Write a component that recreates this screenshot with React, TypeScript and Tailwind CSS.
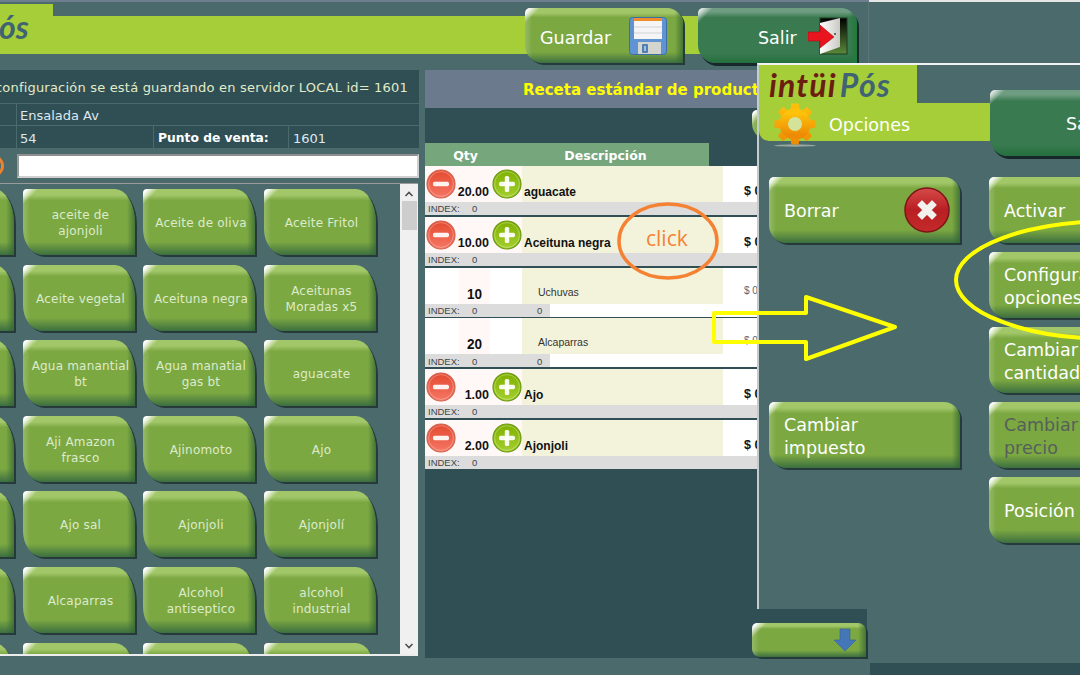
import React from "react";

const FONT = "[font-family:'DejaVu_Sans',sans-serif]";
const ARIAL = "[font-family:'Liberation_Sans',sans-serif]";
const LOGO = "[font-family:'Lato',sans-serif]";

const SHAPE_TILE = "[border-radius:4px_20px_0_20px/4px_34px_0_26px]";
const SHAPE_BTN = "[border-radius:5px_16px_0_18px]";
const GREEN =
  "[background-image:linear-gradient(135deg,#ffffff_0,#ffffff_3px,rgba(255,255,255,0)_11px),linear-gradient(to_left,rgba(50,100,50,.75),rgba(50,100,50,0)_8px),linear-gradient(to_right,rgba(255,255,255,.2),rgba(255,255,255,0)_7px),linear-gradient(to_bottom,#a2c769_0,#a2c769_9%,#7ca842_17%,#7ca842_80%,#3c6f40_100%)] shadow-[2px_2px_0_#263a3c]";
const DARK =
  "[background-image:linear-gradient(135deg,#dfe8e3_0,#dfe8e3_3px,rgba(255,255,255,0)_11px),linear-gradient(to_left,#1f7a3c,rgba(31,122,60,0)_8px),linear-gradient(to_bottom,#6f9d82_0,#6f9d82_7%,#3a7a50_17%,#3a7a50_82%,#23703d_100%)] shadow-[2px_3px_0_#17282a]";

const tiles = [
  "", "aceite de ajonjoli", "Aceite de oliva", "Aceite Fritol",
  "", "Aceite vegetal", "Aceituna negra", "Aceitunas Moradas x5",
  "", "Agua manantial bt", "Agua manatial gas bt", "aguacate",
  "", "Aji Amazon frasco", "Ajinomoto", "Ajo",
  "", "Ajo sal", "Ajonjoli", "Ajonjolí",
  "", "Alcaparras", "Alcohol antiseptico", "alcohol industrial",
  "", "", "", "",
];

function RoundIcon({ plus }: { plus?: boolean }) {
  const id = plus ? "gp" : "gm";
  return (
    <svg width="30" height="30" viewBox="0 0 30 30" className="shrink-0">
      <defs>
        <linearGradient id={id} x1="0" y1="0" x2="0" y2="1">
          <stop offset="0" stopColor={plus ? "#7fb000" : "#e4492f"} />
          <stop offset="1" stopColor={plus ? "#a5cf2e" : "#f57766"} />
        </linearGradient>
      </defs>
      <circle cx="15" cy="15" r="14" fill={`url(#${id})`} stroke={plus ? "#6c9a12" : "#d2664f"} strokeWidth="1.2" />
      <circle cx="15" cy="15" r="12.4" fill="none" stroke="#ffffff" strokeOpacity=".3" />
      <rect x="7" y="12.8" width="16" height="4.4" rx="1.6" fill="#fff" fillOpacity=".92" />
      {plus && <rect x="12.8" y="7" width="4.4" height="16" rx="1.6" fill="#fff" fillOpacity=".92" />}
    </svg>
  );
}

function Row({ qty, name, alt }: { qty: string; name: string; alt?: boolean }) {
  return (
    <div className={`h-[50.8px] flex flex-col bg-white ${ARIAL} text-[#111]`}>
      <div className="h-[36px] flex">
        {alt ? (
          <div className="w-[97px] flex">
            <div className="w-[32px]" />
            <div className="w-[35px] bg-[#fff8f7] flex items-end justify-center pb-[1px] text-[15px] leading-[18px] font-bold [transform:scaleX(.9)]">{qty}</div>
          </div>
        ) : (
          <div className="w-[97px] bg-[#fff8f7] flex pl-[1px] pt-[3px]">
            <RoundIcon />
            <div className="w-[36px] pt-[16px] text-right pr-[3px] text-[12.5px] leading-[14px] font-bold whitespace-nowrap">{qty}</div>
            <RoundIcon plus />
          </div>
        )}
        <div className={`w-[201px] bg-[#f3f3dc] ${alt ? "pl-[16px] pt-[18px] text-[10.5px] leading-[12px] text-[#333]" : "pl-[2px] pt-[19px] text-[12px] leading-[14px] font-bold"}`}>{name}</div>
        <div className={`pl-[21px] ${alt ? "pt-[17px] text-[10px] text-[#556677] leading-[12px]" : "pt-[18px] text-[12.5px] font-bold leading-[14px]"}`}>$ 0</div>
      </div>
      <div className="h-[13px] bg-white">
        <div className={`h-full bg-[#dcdcdc] flex items-center pt-[1px] text-[9.5px] text-[#444] leading-none ${alt ? "w-[125px]" : "w-full"}`}>
          <span className="pl-[3px] w-[47px]">INDEX:</span>
          <span className="w-[65px]">0</span>
          {alt && <span>0</span>}
        </div>
      </div>
      <div className="h-[1.8px] bg-[#2f4f55]" />
    </div>
  );
}

function BigBtn({ children, disabled, icon }: { children?: React.ReactNode; disabled?: boolean; icon?: React.ReactNode }) {
  return (
    <div className={`h-[66px] flex items-center justify-between pl-[15px] pr-[10px] text-[17.5px] leading-[23px] ${GREEN} ${SHAPE_BTN} ${disabled ? "text-[#55605a]" : "text-white"}`}>
      <span className="whitespace-nowrap pt-[3px]">{children}</span>
      {icon}
    </div>
  );
}

function SaveIcon() {
  return (
    <svg width="38" height="38" viewBox="0 0 38 38">
      <rect x=".5" y=".5" width="37" height="37" rx="3" fill="#5f93d3" stroke="#3e6ea8" />
      <rect x="5" y="1" width="28" height="3" fill="#ef8c2c" />
      <rect x="5" y="4" width="28" height="18" fill="#f5f5f5" />
      <path d="M5 10h28M5 16h28" stroke="#cfd3d8" />
      <rect x="9" y="25" width="23" height="12" fill="#d5d5d0" />
      <rect x="13" y="27" width="6" height="9" rx="1" fill="#4f7fb5" />
      <rect x="15" y="29" width="2" height="5" fill="#9fc0e0" />
    </svg>
  );
}

function DoorIcon() {
  return (
    <svg width="40" height="38" viewBox="0 0 40 38">
      <defs>
        <linearGradient id="dg" x1="0" y1="0" x2="0" y2="1">
          <stop offset="0" stopColor="#000" />
          <stop offset="1" stopColor="#5b8a3a" />
        </linearGradient>
        <linearGradient id="dw" x1="0" y1="0" x2="1" y2="0">
          <stop offset="0" stopColor="#ffffff" />
          <stop offset="1" stopColor="#c9c9c4" />
        </linearGradient>
      </defs>
      <rect x="12" y="1" width="27" height="36" fill="url(#dg)" stroke="#1d3d25" />
      <path d="M12 6 L32 1 V30 L12 37 Z" fill="url(#dw)" />
      <path d="M0 15h12v-7l14 12-14 11v-7H0z" fill="#e8141e" stroke="#a01018" strokeWidth=".6" />
      <circle cx="27" cy="17" r="1" fill="#444" />
    </svg>
  );
}

function CloseIcon() {
  return (
    <svg width="46" height="46" viewBox="0 0 46 46">
      <defs>
        <linearGradient id="xg" x1="0" y1="0" x2="0" y2="1">
          <stop offset="0" stopColor="#d84a4a" />
          <stop offset=".5" stopColor="#b81f22" />
          <stop offset="1" stopColor="#c42a2a" />
        </linearGradient>
      </defs>
      <circle cx="23" cy="23" r="22" fill="url(#xg)" stroke="#7a1518" strokeWidth="1.5" />
      <path d="M14 18l4-4 5 5 5-5 4 4-5 5 5 5-4 4-5-5-5 5-4-4 5-5z" fill="#f3f1ee" stroke="#f3f1ee" strokeWidth="1.2" strokeLinejoin="round" />
    </svg>
  );
}

function Gear() {
  const angles = [0, 45, 90, 135, 180, 225, 270, 315];
  return (
    <svg width="42" height="44" viewBox="0 0 42 44" className="shrink-0">
      <defs>
        <linearGradient id="gg" x1="0" y1="0" x2="0" y2="1" gradientUnits="objectBoundingBox">
          <stop offset="0" stopColor="#fdc30b" />
          <stop offset="1" stopColor="#ee8a05" />
        </linearGradient>
      </defs>
      <ellipse cx="21" cy="42.5" rx="21" ry="1.2" fill="#9aa8a0" />
      <path
        d={angles
          .map((a) => {
            const r = (a * Math.PI) / 180;
            const c = Math.cos(r);
            const s = Math.sin(r);
            const p = (u: number, v: number) => `${(21 + u * c - v * s).toFixed(1)} ${(21 + u * s + v * c).toFixed(1)}`;
            return `M${p(12, -5)}L${p(20.5, -3.6)}L${p(20.5, 3.6)}L${p(12, 5)}Z`;
          })
          .join("")}
        fill="url(#gg)"
      />
      <circle cx="21" cy="21" r="11" fill="none" stroke="url(#gg)" strokeWidth="9" />
      <circle cx="21" cy="21" r="7" fill="#d4e29a" />
    </svg>
  );
}

export default function App() {
  return (
    <div className={`relative w-[1080px] h-[675px] overflow-hidden bg-[#4a6a6c] ${FONT}`}>
      {/* top strip */}
      <div className="h-[2px] flex">
        <div className="w-[869px] bg-[#6d7f8f]" />
        <div className="flex-1 bg-[#e6e6e6]" />
      </div>

      {/* header */}
      <div className="h-[68px] grid w-[869px] border-r border-[#5d7577]">
        <div className="col-start-1 row-start-1 pt-[2px]">
          <div className="w-[53px] h-[12px] bg-[#a6ce39]" />
          <div className="w-[710px] h-[38px] bg-[#a6ce39]" />
        </div>
        <div className="col-start-1 row-start-1 pt-[6px] flex items-start">
          <div className="w-[525px] h-[40px] overflow-hidden flex justify-start">
            <span className={`-ml-[1px] text-[#3f6373] text-[32px] leading-[38px] italic font-bold ${LOGO}`}>ós</span>
          </div>
          <div className={`w-[158px] h-[55px] flex items-center pl-[15px] gap-[18px] text-white text-[17.5px] ${GREEN} ${SHAPE_BTN}`}>
            <span className="pt-[5px]">Guardar</span>
            <SaveIcon />
          </div>
          <div className={`ml-[15px] w-[159px] h-[55px] flex items-center pl-[60px] gap-[11px] text-white text-[17.5px] ${DARK} ${SHAPE_BTN}`}>
            <span className="pt-[5px]">Salir</span>
            <DoorIcon />
          </div>
        </div>
      </div>

      {/* main */}
      <div className="flex">
        <div className="w-[419px] shrink-0">
          <div className="bg-[#2f4f55] text-[#e3ebc7]">
            <div className="h-[34px] flex justify-end items-center pr-[11px] pt-[3px] whitespace-nowrap text-[13px] tracking-[.2px] border-b border-[#4a6a6c]">
              La configuración se está guardando en servidor LOCAL id= 1601
            </div>
            <div className="h-[22px] flex items-center border-b border-[#4a6a6c] text-[13px] text-[#dfe8ee]">
              <div className="w-[17px] h-full border-r border-[#4a6a6c]" />
              <div className="pl-[3px] pt-[3px]">Ensalada Av</div>
            </div>
            <div className="h-[22px] flex items-center text-[13px] text-[#dfe8ee]">
              <div className="w-[17px] h-full border-r border-[#4a6a6c]" />
              <div className="w-[137px] pl-[3px] pt-[3px] h-full flex items-center border-r border-[#4a6a6c]">54</div>
              <div className="w-[135px] pl-[4px] pt-[3px] h-full flex items-center border-r border-[#4a6a6c] font-bold text-white text-[12.3px] whitespace-nowrap">Punto de venta:</div>
              <div className="pl-[4px] pt-[3px]">1601</div>
            </div>
          </div>
          <div className="h-[35px] flex items-start pt-[6px]">
            <div className="-ml-[18px] mt-[1px] w-[22px] h-[22px] rounded-full border-[3px] border-[#f0822d]" />
            <div className="ml-[13px] w-[402px] h-[24px] bg-white border-2 border-[#cfcfcf] border-t-[#8f8f8f] border-l-[#9a9a9a]" />
          </div>
          <div className="w-[418px] h-[473px] flex border-t border-[#9a9a9a] border-b-2 border-b-[#ececec] overflow-hidden">
            <div className="w-[400px] overflow-hidden">
              <div className="-ml-[98px] mt-[5px] grid grid-cols-[112px_112px_112px_112px] gap-x-[8.5px] gap-y-[9.6px] w-max">
                {tiles.map((t, i) => (
                  <div key={i} className={`h-[66px] flex items-center justify-center text-center pl-[6px] pr-[2px] pt-[2px] text-[#dcebcb] text-[12px] leading-[16px] tracking-[.2px] ${GREEN} ${SHAPE_TILE}`}>
                    {t}
                  </div>
                ))}
              </div>
            </div>
            <div className="w-[18px] bg-[#f0f0f0] flex flex-col items-center text-[#555]">
              <svg width="10" height="6" viewBox="0 0 10 6" className="mt-[7px]"><path d="M1.5 5L5 1.5 8.5 5" fill="none" stroke="#505050" strokeWidth="1.6" /></svg>
              <div className="mt-[4px] w-[15px] h-[29px] bg-[#cdcdcd]" />
              <div className="flex-1" />
              <svg width="10" height="6" viewBox="0 0 10 6" className="mb-[5px]"><path d="M1.5 1L5 4.5 8.5 1" fill="none" stroke="#505050" strokeWidth="1.6" /></svg>
            </div>
          </div>
        </div>

        <div className="ml-[6px] w-[420px] h-[588px] bg-[#2f4f55] shrink-0">
          <div className="h-[38px] bg-[#6b7b8d] pl-[98px] pt-[3px] flex items-center text-[#ffff00] font-bold text-[15px] whitespace-nowrap overflow-hidden">
            Receta estándar de producto
          </div>
          <div className="h-[35px] pl-[327px] pt-[2px]">
            <div className={`w-[40px] h-[31px] ${GREEN} ${SHAPE_BTN}`} />
          </div>
          <div className="h-[23px] w-[284px] bg-[#76a67c] flex items-center pt-[3px] text-white font-bold text-[12.5px]">
            <span className="w-[81px] text-center">Qty</span>
            <span className="w-[199px] text-center">Descripción</span>
          </div>
          <Row qty="20.00" name="aguacate" />
          <Row qty="10.00" name="Aceituna negra" />
          <Row qty="10" name="Uchuvas" alt />
          <Row qty="20" name="Alcaparras" alt />
          <Row qty="1.00" name="Ajo" />
          <Row qty="2.00" name="Ajonjoli" />
        </div>
      </div>

      {/* options dialog */}
      <div className="absolute left-[757px] top-[63px] w-[323px] h-[600px] bg-[#4a6a6c] border-t-[2px] border-t-[#f2f2f2] border-l-[2px] border-l-[#c4cccc]">
        <div className="grid">
          <div className="col-start-1 row-start-1 w-[231px]">
            <div className={`w-[158px] h-[38px] bg-[#a6ce39] pl-[10px] overflow-hidden text-[32px] leading-[40px] italic font-bold tracking-[1.2px] whitespace-nowrap ${LOGO}`}>
              <span className="text-[#6b1d10]">intüi</span>
              <span className="text-[#3f6373] ml-[3px]">Pós</span>
            </div>
            <div className="h-[38px] bg-[#a6ce39] rounded-bl-[10px] flex items-start pl-[15px] text-white text-[17.5px]">
              <Gear />
              <span className="ml-[13px] mt-[9px]">Opciones</span>
            </div>
          </div>
          <div className="col-start-1 row-start-1 pl-[231px] pt-[25px]">
            <div className={`h-[66px] pl-[76px] pt-[3px] flex items-center text-white text-[17.5px] ${DARK} [border-radius:5px_0_0_18px]`}>Salir</div>
          </div>
        </div>
        <div className="mt-[21px] ml-[10px] grid grid-cols-[191px_1fr] gap-x-[29px] gap-y-[9px]">
          <BigBtn icon={<CloseIcon />}>Borrar</BigBtn>
          <BigBtn>Activar</BigBtn>
          <div />
          <BigBtn>Configurar<br />opciones</BigBtn>
          <div />
          <BigBtn>Cambiar<br />cantidad</BigBtn>
          <BigBtn>Cambiar<br />impuesto</BigBtn>
          <BigBtn disabled>Cambiar<br />precio</BigBtn>
          <div />
          <BigBtn>Posición</BigBtn>
        </div>
      </div>
      <div className="absolute left-[870px] top-[663px] w-[210px] h-[12px] bg-[#2f4f55]" />

      {/* scroll-down button */}
      <div className="absolute left-[757px] top-[609px] w-[110px] h-[49px] bg-[#2f4f55]" />
      <div className="absolute left-[757px] top-[658px] w-[113px] h-[17px] bg-[#4a6a6c]" />
      <div className={`absolute left-[752px] top-[623px] w-[114px] h-[34px] flex justify-end items-center pr-[10px] ${GREEN} [border-radius:5px_8px_0_8px]`}>
        <svg width="22" height="24" viewBox="0 0 22 24"><path d="M6 1h10v11h6L11 23 0 12h6z" fill="#4477b8" stroke="#36609a" strokeWidth=".6" /></svg>
      </div>

      {/* annotations */}
      <svg className="absolute inset-0" width="1080" height="675" viewBox="0 0 1080 675" fill="none">
        <ellipse cx="668" cy="241" rx="49" ry="37" stroke="#f58233" strokeWidth="3.5" />
        <path d="M714 313H806V297L895 327L806 359V342H714Z" stroke="#ffff00" strokeWidth="4" strokeLinejoin="round" />
        <ellipse cx="1112" cy="280" rx="156" ry="59" stroke="#ffff00" strokeWidth="4" />
      </svg>
      <span className="absolute left-[646px] top-[224px] text-[21px] leading-[28px] text-[#f58233] [font-family:'Open_Sans',sans-serif]">click</span>
    </div>
  );
}
